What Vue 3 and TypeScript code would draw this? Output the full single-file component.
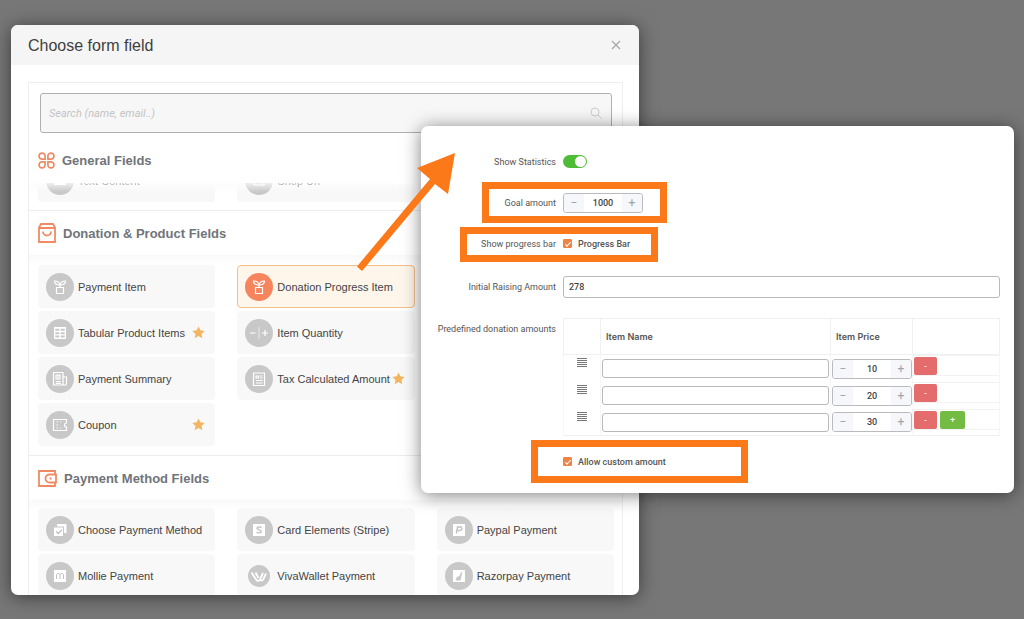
<script setup lang="ts">
import { computed, ref } from 'vue'

type Glyph =
  | 'card' | 'image' | 'gift' | 'table' | 'receipt' | 'coupon' | 'quantity'
  | 'tax' | 'choose' | 'stripe' | 'paypal' | 'mollie' | 'viva' | 'razorpay'

interface Field {
  label: string
  glyph: Glyph
  starred?: boolean
  selected?: boolean
}

interface Section {
  id: string
  title: string
  icon: 'petals' | 'bag' | 'wallet'
  columns: Field[][]
}

const sections: Section[] = [
  {
    id: 'general',
    title: 'General Fields',
    icon: 'petals',
    columns: [
      [{ label: 'Text Content', glyph: 'card' }],
      [{ label: 'Shop Url', glyph: 'image' }],
      [],
    ],
  },
  {
    id: 'donation',
    title: 'Donation & Product Fields',
    icon: 'bag',
    columns: [
      [
        { label: 'Payment Item', glyph: 'gift' },
        { label: 'Tabular Product Items', glyph: 'table', starred: true },
        { label: 'Payment Summary', glyph: 'receipt' },
        { label: 'Coupon', glyph: 'coupon', starred: true },
      ],
      [
        { label: 'Donation Progress Item', glyph: 'gift', selected: true },
        { label: 'Item Quantity', glyph: 'quantity' },
        { label: 'Tax Calculated Amount', glyph: 'tax', starred: true },
      ],
      [],
    ],
  },
  {
    id: 'payment',
    title: 'Payment Method Fields',
    icon: 'wallet',
    columns: [
      [
        { label: 'Choose Payment Method', glyph: 'choose' },
        { label: 'Mollie Payment', glyph: 'mollie' },
      ],
      [
        { label: 'Card Elements (Stripe)', glyph: 'stripe' },
        { label: 'VivaWallet Payment', glyph: 'viva' },
      ],
      [
        { label: 'Paypal Payment', glyph: 'paypal' },
        { label: 'Razorpay Payment', glyph: 'razorpay' },
      ],
    ],
  },
]

const search = ref('')
const showStatistics = ref(true)
const goal = ref(1000)
const progressBar = ref(true)
const raised = ref('278')
const allowCustom = ref(true)
const amounts = ref([
  { name: '', price: 10 },
  { name: '', price: 20 },
  { name: '', price: 30 },
])
const lastIndex = computed(() => amounts.value.length - 1)

function addAmount() {
  amounts.value.push({ name: '', price: 0 })
}
function removeAmount(index: number) {
  amounts.value.splice(index, 1)
}
</script>

<template>
  <main class="stage">
    <section class="chooser" aria-labelledby="chooser-title">
      <header class="chooser-head">
        <h1 id="chooser-title">Choose form field</h1>
        <button class="close" type="button" aria-label="Close">
          <svg viewBox="0 0 10 10" width="10" height="10"><path d="M1 1l8 8M9 1L1 9" /></svg>
        </button>
      </header>

      <div class="chooser-body">
        <label class="search">
          <input v-model="search" type="text" placeholder="Search (name, email..)" aria-label="Search fields" />
          <svg viewBox="0 0 12 12" width="12" height="12"><circle cx="5" cy="5" r="4" /><path d="M8 8l3.5 3.5" /></svg>
        </label>

        <section v-for="s in sections" :key="s.id" class="group" :class="s.id">
          <h2>
            <svg v-if="s.icon === 'petals'" class="head-icon" viewBox="0 0 18 18" width="17" height="17">
              <path d="M7.500 7.500H4.500A3.200 3.200 0 1 1 7.500 4.500ZM10.500 7.500h3A3.200 3.200 0 1 0 10.500 4.500ZM7.500 10.500H4.500A3.200 3.200 0 1 0 7.500 13.500ZM10.500 10.500h3A3.200 3.200 0 1 1 10.500 13.500Z" />
            </svg>
            <svg v-else-if="s.icon === 'bag'" class="head-icon" viewBox="0 0 18 20" width="18" height="20">
              <path d="M1 4.500L3 1h12L17 4.500V19H1ZM1.500 5h15M5 8.500a4 4 0 0 0 8 0" />
            </svg>
            <svg v-else class="head-icon" viewBox="0 0 19 17" width="19" height="17">
              <path d="M17 4.500V1H1v15h16v-3.500M18 4.500h-6.500a4 4 0 0 0 0 8H18ZM11.500 8.500h2" />
            </svg>
            {{ s.title }}
          </h2>
          <div class="fields">
            <ul v-for="(col, c) in s.columns" :key="c">
              <li v-for="f in col" :key="f.label">
                <button class="field" :class="{ selected: f.selected }" type="button">
                  <svg class="glyph" :class="f.glyph" viewBox="0 0 28 28" width="28" height="28">
                    <circle class="disc" cx="14" cy="14" :r="f.glyph === 'viva' ? 11 : 14" />
                    <g v-if="f.glyph === 'gift'" class="line">
                      <path d="M10.500 14.500h7v6h-7ZM14 14.500v-3M14 12c-3.500 0-5.500-1.500-5.500-4 3 0 5 1 5.500 4c.5-3 2.500-4 5.500-4 0 2.500-2 4-5.500 4" />
                    </g>
                    <path v-else-if="f.glyph === 'table'" class="solid" d="M8 8h12v12H8ZM9.300 9.800v2h4v-2ZM14.700 9.800v2h4v-2ZM9.300 13.200v2h4v-2ZM14.700 13.200v2h4v-2ZM9.300 16.600v2h4v-2ZM14.700 16.600v2h4v-2Z" />
                    <g v-else-if="f.glyph === 'receipt'" class="line">
                      <path d="M7.500 7.500h9.500v12.500h-9.500ZM17 12h3.500v6.500a1.500 1.500 0 0 1-3.500 0M9.800 16.500h5M9.800 18.300h5M10 10h4v4h-4ZM12 10v4" />
                    </g>
                    <g v-else-if="f.glyph === 'coupon'" class="line">
                      <path d="M7.500 8.500h13v3.500a2 2 0 0 0 0 4v3.500h-13ZM10.500 11h1.500M10.500 14h1.500M10.500 17h1.500M14 11h1M14 17h1" />
                    </g>
                    <g v-else-if="f.glyph === 'quantity'" class="line">
                      <path d="M5 14h5.500M17 14h6M20 11v6" /><path class="faint" d="M14 8v12" />
                    </g>
                    <g v-else-if="f.glyph === 'tax'" class="line">
                      <path d="M8.500 8h11v12.500h-11ZM11 11h2.500v2H11ZM15 11h2.500M15 13h2.500M11 15.500h6.500M11 18h6.500" />
                    </g>
                    <g v-else-if="f.glyph === 'choose'">
                      <path class="solid" d="M11 8h9.500v9H18v-6.500h-7Z" /><path class="solid" d="M8 11.500h9v8.500H8Z" />
                      <path class="cut" d="M10.300 15.600l2 2 3.500-3.800" />
                    </g>
                    <g v-else-if="f.glyph === 'stripe'">
                      <path class="solid" d="M8 8h12v12H8Z" />
                      <path class="cut" d="M16.500 11.500c-2-1-4.500-.7-4.500.8 0 1.700 4.300 1.300 4.300 3.200 0 1.600-2.800 1.700-4.800.7" />
                    </g>
                    <g v-else-if="f.glyph === 'paypal'">
                      <path class="solid" d="M8 8h12v12H8Z" />
                      <path class="cut" d="M11.300 17.500l1.200-6.500h3c2.200 0 2 3.500-.8 3.500h-2" />
                    </g>
                    <g v-else-if="f.glyph === 'mollie'">
                      <path class="solid" d="M8 8h12v12H8Z" />
                      <path class="cut thin" d="M10.500 17v-4c0-2 3.500-2 3.500 0v4M14 13c0-2 3.500-2 3.500 0v4" />
                    </g>
                    <g v-else-if="f.glyph === 'viva'" class="line bold">
                      <path d="M6.500 10.500l4.500 7c1.300 2 3.200 1.500 4-.2l3-6.300M10.500 10.500l3 5.500M15 17.500c1.300 1.800 2.800 1 3.500-.7l2.500-5.300" />
                    </g>
                    <g v-else-if="f.glyph === 'razorpay'">
                      <path class="solid" d="M8 8h12v12H8Z" />
                      <path class="shade" d="M17.500 9.500l-2 9h-5l1.200-3.500 2.800-1 .8-2.500Z" />
                    </g>
                    <g v-else-if="f.glyph === 'card'"><path class="solid" d="M8 9h12v9H8Z" /></g>
                    <g v-else class="line"><path d="M9 8h10v10H9ZM11 15l3-3 4 4" /></g>
                  </svg>
                  <span class="name">{{ f.label }}</span>
                  <svg v-if="f.starred" class="star" viewBox="0 0 14 14" width="13" height="13">
                    <path d="M7 .5l2 4.200 4.600.6-3.400 3.200.9 4.600L7 10.900l-4.100 2.200.9-4.600L.4 5.300 5 4.700Z" />
                  </svg>
                </button>
              </li>
            </ul>
          </div>
        </section>
      </div>
    </section>

    <form class="settings" aria-label="Donation progress settings" @submit.prevent>
      <div class="row">
        <label class="caption" for="stats">Show Statistics</label>
        <div><input id="stats" v-model="showStatistics" class="switch" type="checkbox" role="switch" /></div>
      </div>

      <div class="row">
        <span class="mark mark-goal"></span>
        <label class="caption" for="goal">Goal amount</label>
        <div class="stepper">
          <button type="button" aria-label="Decrease goal" @click="goal--">−</button>
          <input id="goal" v-model.number="goal" type="text" inputmode="numeric" />
          <button type="button" aria-label="Increase goal" @click="goal++">+</button>
        </div>
      </div>

      <div class="row">
        <span class="mark mark-bar"></span>
        <span class="caption">Show progress bar</span>
        <label class="tick"><input v-model="progressBar" type="checkbox" />Progress Bar</label>
      </div>

      <div class="row raised-row">
        <label class="caption" for="raised">Initial Raising Amount</label>
        <input id="raised" v-model="raised" class="text" type="text" />
      </div>

      <div class="row table-row">
        <span id="amounts-label" class="caption">Predefined donation amounts</span>
        <table aria-labelledby="amounts-label">
          <thead>
            <tr>
              <th class="grip-col"></th>
              <th>Item Name</th>
              <th class="price-col">Item Price</th>
              <th class="action-col"></th>
            </tr>
          </thead>
          <tbody>
            <tr v-for="(a, i) in amounts" :key="i">
              <td class="grip">
                <svg viewBox="0 0 10 10" width="10" height="10"><path d="M0 .5h10M0 2.500h10M0 4.500h10M0 6.500h10M0 8.500h10" /></svg>
              </td>
              <td><input v-model="a.name" class="text" type="text" aria-label="Item name" /></td>
              <td>
                <div class="stepper">
                  <button type="button" aria-label="Decrease price" @click="a.price--">−</button>
                  <input v-model.number="a.price" type="text" inputmode="numeric" aria-label="Item price" />
                  <button type="button" aria-label="Increase price" @click="a.price++">+</button>
                </div>
              </td>
              <td class="actions">
                <div>
                  <button class="remove" type="button" @click="removeAmount(i)">-</button>
                  <button v-if="i === lastIndex" class="add" type="button" @click="addAmount">+</button>
                </div>
              </td>
            </tr>
          </tbody>
        </table>
      </div>

      <div class="row">
        <span class="mark mark-custom"></span>
        <span></span>
        <label class="tick"><input v-model="allowCustom" type="checkbox" />Allow custom amount</label>
      </div>

      <svg class="arrow" viewBox="0 0 100 120" width="100" height="120" aria-hidden="true">
        <path d="M98 0L60 15l13 11L0 113.500l5 4.500L78 31l13 10Z" />
      </svg>
    </form>
  </main>
</template>

<style>
body {
  margin: 0;
  background: #777;
}
</style>

<style scoped>
* {
  box-sizing: border-box;
}
button,
input {
  margin: 0;
  padding: 0;
  border: 0;
  font: inherit;
  color: inherit;
  background: none;
}
svg {
  display: block;
  flex: none;
}
.stage {
  display: grid;
  grid-template-columns: 410fr 218fr 375fr;
  grid-template-rows: 100%;
  height: 100vh;
  padding: 25px 10px 24px 11px;
  overflow: hidden;
  background: #777;
  font-family: "Liberation Sans", Arial, sans-serif;
}
.chooser {
  grid-area: 1 / 1 / 2 / 3;
  display: flex;
  flex-direction: column;
  overflow: hidden;
  border-radius: 7px;
  background: #fff;
  box-shadow: 0 2px 18px rgba(0, 0, 0, 0.5);
}
.chooser-head {
  display: flex;
  flex: none;
  align-items: center;
  justify-content: space-between;
  height: 40px;
  padding: 0 18px 0 17px;
  background: #f5f5f5;
}
h1 {
  margin: 0;
  font-size: 16px;
  font-weight: 400;
  line-height: 20px;
  padding-top: 1px;
  color: #3f3f3f;
}
.close svg {
  fill: none;
  stroke: #a6a6a6;
  stroke-width: 1.2;
}
.chooser-body {
  flex: 1;
  margin: 17px 16px 0 17px;
  border: solid #eee;
  border-width: 1px 1px 0;
  min-height: 0;
  overflow: hidden;
}
.search {
  display: flex;
  align-items: center;
  height: 40px;
  margin: 10px 10px 0 11px;
  padding: 0 9px 0 8px;
  border: 1px solid #b0b0b0;
  border-radius: 3px;
  background: #f7f7f7;
}
.search input {
  flex: 1;
  outline: 0;
  font-family: Roboto, sans-serif;
  font-size: 11px;
  font-style: italic;
}
.search input::placeholder {
  color: #c4c4c4;
}
.search svg {
  fill: none;
  stroke: #ccc;
}
.group + .group {
  border-top: 1px solid #ececec;
}
h2 {
  display: flex;
  align-items: center;
  gap: 7px;
  height: 44px;
  margin: 0;
  padding-left: 9px;
  font-size: 13px;
  font-weight: 700;
  color: #70747a;
}
.general h2 {
  height: 50px;
  padding-top: 4px;
}
.head-icon {
  fill: none;
  stroke: #f08a64;
  stroke-width: 1.8;
}
.fields {
  display: grid;
  grid-template-columns: repeat(3, minmax(0, 1fr));
  gap: 22px;
  padding: 10px 8px 9px 9px;
  background: linear-gradient(#f9f9f9, #fff 10px);
}
.payment .fields {
  padding-top: 8px;
}
.general .fields {
  align-content: end;
  height: 27px;
  padding-top: 0;
  padding-bottom: 8px;
  overflow: hidden;
  mask-image: linear-gradient(rgba(0, 0, 0, 0.3), #000 9px);
}
ul {
  display: flex;
  flex-direction: column;
  gap: 3px;
  margin: 0;
  padding: 0;
  list-style: none;
}
.field {
  display: flex;
  align-items: center;
  gap: 4px;
  width: 100%;
  height: 43px;
  padding: 0 9px 0 7px;
  border: 1px solid #f8f8f8;
  border-radius: 4px;
  background: #f8f8f8;
  text-align: left;
  font-size: 11px;
  color: #444;
}
.field.selected {
  border-color: #f5bf88;
  background: #fef6ea;
}
.name {
  flex: 1;
  min-width: 0;
  white-space: nowrap;
}
.star {
  fill: #f3b562;
}
.disc {
  fill: #c8c8c8;
}
.selected .disc {
  fill: #f6845c;
}
.line {
  fill: none;
  stroke: #fff;
  stroke-width: 1.2;
}
.bold {
  stroke-width: 1.8;
}
.faint {
  stroke-width: 0.6;
}
.solid {
  fill: #fff;
  fill-rule: evenodd;
}
.cut {
  fill: none;
  stroke: #c0c0c0;
  stroke-width: 1.4;
}
.thin {
  stroke-width: 1;
}
.shade {
  fill: #c8c8c8;
}

.settings {
  grid-area: 1 / 2 / 2 / 4;
  position: relative;
  align-self: start;
  margin-top: 101px;
  padding: 15px 14px 11px 0;
  border-radius: 7px;
  background: #fff;
  box-shadow: 0 2px 18px rgba(0, 0, 0, 0.5);
  font-family: Roboto, sans-serif;
  font-size: 9px;
  color: #555;
}
.row {
  position: relative;
  display: grid;
  grid-template-columns: 135px minmax(0, 1fr);
  align-items: center;
  gap: 7px;
  height: 41px;
}
.raised-row {
  margin-top: 2px;
}
.caption {
  text-align: right;
  white-space: nowrap;
}
.switch {
  display: block;
  width: 24px;
  height: 13px;
  padding: 1px;
  border-radius: 7px;
  appearance: none;
  background: #bbb;
}
.switch::before {
  content: "";
  display: block;
  width: 11px;
  height: 11px;
  border-radius: 50%;
  background: #fff;
}
.switch:checked {
  padding-left: 12px;
  background: #4fbc35;
}
.mark {
  position: absolute;
  border: 7px solid #fb7918;
  pointer-events: none;
}
.mark-goal {
  left: 61px;
  top: 0;
  width: 185px;
  height: 41px;
}
.mark-bar {
  left: 39px;
  top: 4px;
  width: 198px;
  height: 35px;
}
.mark-custom {
  left: 110px;
  top: -1px;
  width: 217px;
  height: 43px;
}
.stepper {
  display: flex;
  width: 80px;
  height: 20px;
  overflow: hidden;
  border: 1px solid #b9bbc0;
  border-radius: 3px;
}
.stepper input {
  flex: 1;
  min-width: 0;
  text-align: center;
  font-weight: 500;
  color: #444;
}
.stepper button {
  width: 20px;
  background: #f5f7fa;
  font-size: 12px;
  line-height: 18px;
  color: #a0a3a8;
}
.tick {
  display: flex;
  align-items: center;
  gap: 6px;
  font-weight: 500;
}
.tick input {
  width: 9px;
  height: 9px;
  border-radius: 1px;
  appearance: none;
  border: 1px solid #ee8444;
}
.tick input:checked {
  background: #ee8444;
}
.tick input:checked::before {
  content: "";
  display: block;
  width: 5px;
  height: 2px;
  margin: 2px 1px;
  border: solid #fff;
  border-width: 0 0 1px 1px;
  transform: rotate(-45deg);
}
.text {
  display: block;
  width: 100%;
  height: 22px;
  padding: 0 5px;
  border: 1px solid #b9b9b9;
  border-radius: 3px;
  font-weight: 500;
  color: #444;
}
.table-row {
  align-items: start;
  height: auto;
  margin: 11px 0 5px;
}
.table-row .caption {
  padding-top: 6px;
}
table {
  width: 100%;
  border-collapse: collapse;
  table-layout: fixed;
  border: 1px solid #f0f0f0;
}
th {
  height: 36px;
  padding: 0 5px;
  border: 1px solid #f0f0f0;
  text-align: left;
  font-family: Inter, sans-serif;
  font-weight: 600;
}
.grip-col {
  width: 37px;
}
.price-col {
  width: 82px;
}
.action-col {
  width: 87px;
}
td {
  height: 27px;
  padding: 1px 1px 0;
  border: solid #f6f6f6;
  border-width: 0 1px;
}
td .text {
  height: 19px;
}
.grip {
  padding-top: 3px;
  vertical-align: top;
}
.grip svg {
  margin: 0 auto;
  stroke: #777;
}
td.actions {
  padding: 0;
  vertical-align: top;
}
.actions div {
  display: flex;
  gap: 3px;
  height: 21px;
  padding: 1px;
  border: solid #f2f2f2;
  border-width: 1px 0;
}
.actions button {
  width: 23px;
  height: 18px;
  border-radius: 2px;
  color: #fff;
}
.remove {
  background: #e46c6c;
}
.actions .add {
  width: 25px;
  background: #74bb44;
}
.arrow {
  position: absolute;
  left: -64px;
  top: 27px;
  fill: #fb7918;
  pointer-events: none;
}
</style>
